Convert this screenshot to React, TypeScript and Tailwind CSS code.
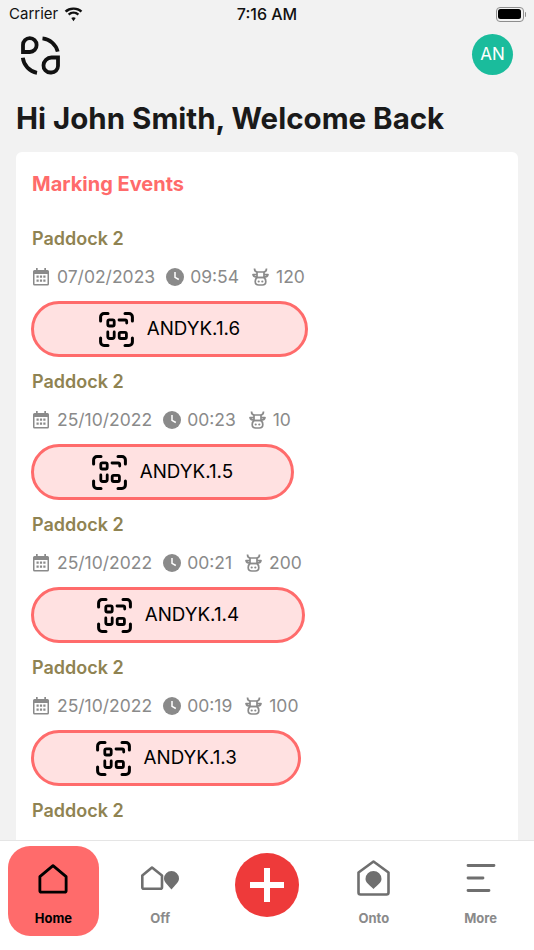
const EVENTS = [
  { date: "07/02/2023", time: "09:54", count: "120", tag: "ANDYK.1.6" },
  { date: "25/10/2022", time: "00:23", count: "10", tag: "ANDYK.1.5" },
  { date: "25/10/2022", time: "00:21", count: "200", tag: "ANDYK.1.4" },
  { date: "25/10/2022", time: "00:19", count: "100", tag: "ANDYK.1.3" },
  { date: "25/10/2022", time: "00:17", count: "50", tag: "ANDYK.1.2" },
];

function Logo() {
  return (
    <svg width="40" height="40" viewBox="0 0 40 40" fill="none" stroke="#111" strokeWidth="3.800">
      <path d="M3 17V10a6.800 6.800 0 0 1 13.600 0 6.800 6.800 0 0 1-6.800 7Z" />
      <path d="M38 22.500V31a6.600 6.600 0 0 1-6.600 6.500h-1a6.800 6.800 0 0 1-6.900-7.200 8 8 0 0 1 8-7.800Z" />
      <path d="M22.500 3.400a17.500 17.500 0 0 1 15.200 13.200" />
      <path d="M2.800 22.800a17.500 17.500 0 0 0 14.200 15" />
    </svg>
  );
}

function Wifi() {
  return (
    <svg width="19" height="15" viewBox="0 0 19 14" fill="#111">
      <path d="M9.5 2.2c2.7 0 5.100 1 7 2.800l1.800-1.800A12.600 12.600 0 0 0 9.500 0 12.600 12.600 0 0 0 .7 3.200L2.500 5a10.200 10.200 0 0 1 7-2.800Z" />
      <path d="M9.500 6.300c1.500 0 2.900.6 4 1.600l1.700-1.700a8.200 8.200 0 0 0-11.400 0l1.700 1.700c1.100-1 2.500-1.600 4-1.600Z" />
      <path d="M9.500 9.700c-.9 0-1.600.3-2.200.9l2.200 3.100 2.200-3.100c-.6-.6-1.300-.9-2.200-.9Z" />
    </svg>
  );
}

function Battery() {
  return (
    <div className="flex items-center gap-px">
      <div className="flex h-[15px] w-[28px] rounded-[4px] border border-[#8e8e8e] p-[1.5px]">
        <div className="flex-1 rounded-[2.5px] bg-black" />
      </div>
      <div className="h-[5px] w-[1.500px] rounded-r-sm bg-[#8e8e8e]" />
    </div>
  );
}

function CalendarIcon() {
  return (
    <svg width="18" height="18" viewBox="0 0 18 18" fill="#8a8a8a">
      <path fillRule="evenodd" d="M4 0h1.700V2h6.600V0H14V2h1.500A1.500 1.500 0 0 1 17 3.500V16a1.500 1.500 0 0 1-1.500 1.500h-13A1.500 1.500 0 0 1 1 16V3.500A1.500 1.500 0 0 1 2.500 2H4ZM2.500 6v10h13V6Z" />
      <path d="M4.500 7.500h2.200v2.200H4.500ZM7.900 7.500h2.200v2.200H7.900ZM11.300 7.500h2.200v2.200h-2.200ZM4.500 11.500h2.200v2.200H4.500ZM7.900 11.500h2.200v2.200H7.900ZM11.300 11.500h2.200v2.200h-2.200Z" />
    </svg>
  );
}

function ClockIcon() {
  return (
    <svg width="18" height="18" viewBox="0 0 18 18">
      <circle cx="9" cy="9" r="9" fill="#8a8a8a" />
      <path d="M9 4v5.300l3.800 2.200" fill="none" stroke="#fff" strokeWidth="1.500" />
    </svg>
  );
}

function CowIcon() {
  return (
    <svg width="19" height="18" viewBox="0 0 19 18" fill="none" stroke="#8a8a8a" strokeWidth="1.700" strokeLinejoin="round">
      <path d="M3.500.500c0 2.500 1 3.500 3 3.500h6c2 0 3-1 3-3.500" />
      <path d="M6 4v5.500h7V4" />
      <path d="M6 6.500H2c.3 1.500 1.800 2.500 4 2.500M13 6.500h4c-.3 1.500-1.800 2.500-4 2.500" />
      <path d="M6 9.500c-1.200 1-1.800 2.500-1.800 4 0 2 1.600 3.500 3.600 3.500h3.400c2 0 3.600-1.500 3.600-3.500 0-1.500-.6-3-1.800-4Z" />
      <path d="M7.700 13.500h.01M11.300 13.500h.01" strokeLinecap="round" strokeWidth="2.200" />
    </svg>
  );
}

function ScanIcon() {
  return (
    <svg width="35" height="35" viewBox="0 0 35 35" fill="none" stroke="#000" strokeWidth="3" strokeLinecap="round">
      <path d="M1.600 9V5A3.400 3.400 0 0 1 5 1.600h4" />
      <path d="M26 1.600h4A3.400 3.400 0 0 1 33.400 5v4" />
      <path d="M33.400 26v4a3.400 3.400 0 0 1-3.400 3.400h-4" />
      <path d="M9 33.400H5A3.400 3.400 0 0 1 1.600 30v-4" />
      <g strokeWidth="2.800">
        <rect x="8.800" y="7.800" width="6.400" height="6.200" rx="1.500" />
        <path d="M20 8h6.200a1.500 1.500 0 0 1 1.500 1.500V11" />
        <path d="M8.800 20v4.500a2 2 0 0 0 2 2h2.400a2 2 0 0 0 2-2V20" />
        <rect x="20.200" y="20.300" width="7.200" height="6.200" rx="1.500" />
      </g>
    </svg>
  );
}

function EventRow({ date, time, count, tag }: (typeof EVENTS)[number]) {
  return (
    <div className="flex w-fit flex-col">
      <div className="h-5 text-lg leading-5 font-semibold text-[#8f8352]">Paddock 2</div>
      <div className="mt-4 flex h-6 items-center pr-[2px] text-[17.500px] text-[#8a8a8a]">
        <CalendarIcon />
        <span className="mr-[11px] ml-[7px]">{date}</span>
        <ClockIcon />
        <span className="mr-3 ml-[6px]">{time}</span>
        <CowIcon />
        <span className="ml-[6px]">{count}</span>
      </div>
      <div className="-mx-px mt-3 flex h-[56px] items-center justify-center gap-[13px] rounded-full border-[3px] border-[#ff6b6b] bg-[#ffe1e1] text-[18.800px] text-black">
        <ScanIcon />
        <span>{tag}</span>
      </div>
    </div>
  );
}

function TabLabel({ children, active }: { children: string; active?: boolean }) {
  return (
    <span className={active ? "text-[13px] font-bold text-black" : "text-[13px] font-bold text-[#8a8a8a]"}>
      {children}
    </span>
  );
}

function HomeTab() {
  return (
    <div className="flex flex-1 justify-center">
      <div className="flex h-[90px] w-[91px] flex-col items-center rounded-[22px] bg-[#ff6b6b] pt-[18px]">
        <svg width="30" height="30" viewBox="0 0 32 32" fill="none" stroke="#000" strokeWidth="3" strokeLinejoin="round">
          <path d="M2 13.500 16 1.800l14 11.700v15a1.500 1.500 0 0 1-1.500 1.500h-25A1.500 1.500 0 0 1 2 28.500Z" />
        </svg>
        <div className="mt-[15px] leading-4">
          <TabLabel active>Home</TabLabel>
        </div>
      </div>
    </div>
  );
}

function IconTab({ label, children }: { label: string; children: React.ReactNode }) {
  return (
    <div className="flex flex-1 flex-col items-center pt-[13px]">
      <div className="flex h-[38px] items-center justify-center">{children}</div>
      <div className="mt-3 leading-4">
        <TabLabel>{label}</TabLabel>
      </div>
    </div>
  );
}

export default function App() {
  return (
    <div className="flex h-[950px] flex-col overflow-hidden bg-[#f2f2f2] font-['Inter',sans-serif]">
      <div className="relative flex h-7 items-center justify-between pr-2 pl-[9px] text-[15px] text-[#111]">
        <div className="flex items-center gap-[6px]">
          <span>Carrier</span>
          <Wifi />
        </div>
        <span className="absolute left-0 w-full text-center text-base font-medium">7:16 AM</span>
        <Battery />
      </div>

      <div className="flex items-center justify-between pt-[6px] pr-[21px] pl-[20px]">
        <Logo />
        <div className="flex h-[41px] w-[41px] items-center justify-center rounded-full bg-[#1abc9c] text-[17px] text-white">
          AN
        </div>
      </div>

      <h1 className="mt-[25px] mb-4 px-4 text-[29.500px] leading-9 font-bold text-[#1a1a1a]">
        Hi John Smith, Welcome Back
      </h1>

      <div className="mx-4 min-h-0 flex-1 rounded-t-md bg-white px-4 pt-4">
        <div className="text-xl leading-8 font-bold text-[#ff6b6b]">Marking Events</div>
        <div className="mt-[29px] flex flex-col gap-[15px]">
          {EVENTS.map((event) => (
            <EventRow key={event.tag} {...event} />
          ))}
        </div>
      </div>

      <div className="relative flex h-[110px] shrink-0 border-t border-[#e5e5e5] bg-white pt-[5px]">
        <HomeTab />
        <IconTab label="Off">
          <svg width="38" height="24" viewBox="0 0 38 24" fill="none">
            <path d="M1.300 9.500 11 1.500l10 8v11.700a1.500 1.500 0 0 1-1.500 1.500H2.800a1.500 1.500 0 0 1-1.500-1.500Z" stroke="#6f6f6f" strokeWidth="2.600" strokeLinejoin="round" />
            <path d="M30.500 5a7.500 7.500 0 0 1 7.500 7.500c0 4-4 6.500-7.500 11-3.500-4.500-7.500-7-7.500-11A7.500 7.500 0 0 1 30.500 5Z" fill="#6f6f6f" />
          </svg>
        </IconTab>
        <div className="flex flex-1 justify-center pt-[7px]">
          <div className="flex h-16 w-16 items-center justify-center rounded-full bg-[#ee3a3a]">
            <svg width="36" height="36" viewBox="0 0 36 36" fill="#fff">
              <path d="M15 1h6v14h14v6H21v14h-6V21H1v-6h14Z" />
            </svg>
          </div>
        </div>
        <IconTab label="Onto">
          <svg width="33" height="36" viewBox="0 0 33 36" fill="none">
            <path d="M1.500 12.500 16.500 1.500l15 11v20a2 2 0 0 1-2 2h-26a2 2 0 0 1-2-2Z" stroke="#6f6f6f" strokeWidth="2.600" strokeLinejoin="round" />
            <path d="M16.500 11a8 8 0 0 1 8 8c0 3.500-4 6-8 10-4-4-8-6.500-8-10a8 8 0 0 1 8-8Z" fill="#6f6f6f" />
          </svg>
        </IconTab>
        <IconTab label="More">
          <svg width="30" height="28" viewBox="0 0 30 28" fill="none" stroke="#6f6f6f" strokeWidth="2.800" strokeLinecap="round">
            <path d="M2 1.500h26M2 14h15M2 26.500h21" />
          </svg>
        </IconTab>
      </div>
    </div>
  );
}
